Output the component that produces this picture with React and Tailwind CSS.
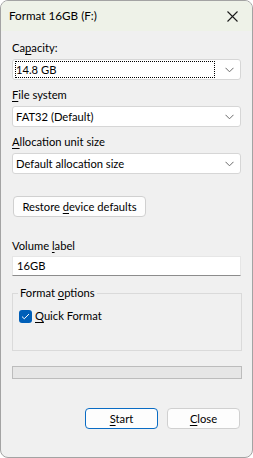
import React from 'react';

const Chevron = () => (
  <svg width="9" height="6" viewBox="0 0 9 6" className="shrink-0">
    <path d="M0.5 0.8 L4.5 4.8 L8.5 0.8" fill="none" stroke="#6a6a6a" strokeWidth="1" />
  </svg>
);

const Combo = ({ value, focused }) => (
  <div className="h-[21px] flex items-center justify-between bg-white border border-[#d6d6d6] rounded-[3px] pl-[2px] pr-[6px]">
    {focused ? (
      <div className="flex-1 h-[17px] mr-[10px] border border-dotted border-black flex items-center leading-none">
        {value}
      </div>
    ) : (
      <div className="flex-1 pl-[1px] leading-none">{value}</div>
    )}
    <Chevron />
  </div>
);

const Label = ({ pre, u, post, className = '' }) => (
  <div className={`h-[16px] leading-[16px] ${className}`}>
    {pre}
    <span className="underline underline-offset-[2px]">{u}</span>
    {post}
  </div>
);

export default function App() {
  return (
    <div className="w-[253px] h-[458px] bg-[#f0f0f0] border border-[#a3a3a3] rounded-[8px] overflow-hidden flex flex-col text-[11.2px] text-black font-['Segoe_UI','Lato',sans-serif]">
      {/* Title bar */}
      <div className="h-[30px] shrink-0 bg-[#eef2e8] flex items-center justify-between pl-[8px] pr-[14px]">
        <span className="leading-none text-[11.7px]">Format 16GB (F:)</span>
        <svg width="11" height="11" viewBox="0 0 11 11">
          <path d="M0.5 0.5 L10.5 10.5 M10.5 0.5 L0.5 10.5" stroke="#1b1b1b" strokeWidth="1.1" />
        </svg>
      </div>

      {/* Body */}
      <div className="flex flex-col px-[11px]">
        <Label pre="Ca" u="p" post="acity:" className="mt-[9px]" />
        <div className="mt-[3px]">
          <Combo value="14.8 GB" focused />
        </div>

        <Label pre="" u="F" post="ile system" className="mt-[7px]" />
        <div className="mt-[3px]">
          <Combo value="FAT32 (Default)" />
        </div>

        <Label pre="" u="A" post="llocation unit size" className="mt-[7px]" />
        <div className="mt-[3px]">
          <Combo value="Default allocation size" />
        </div>

        <div className="mt-[22px] flex">
          <button className="h-[21px] w-[133px] ml-[1px] bg-[#fdfdfd] border border-[#d0d0d0] rounded-[4px] leading-none">
            Restore <span className="underline underline-offset-[2px]">d</span>evice defaults
          </button>
        </div>

        <Label pre="Volume " u="l" post="abel" className="mt-[21px]" />
        <div className="mt-[2px] h-[20px] bg-white border border-[#e6e6e6] border-b-[#8c8c8c] flex items-center pl-[4px] leading-none">
          16GB
        </div>

        <fieldset className="mt-[9px] h-[66px] border border-[#dadada] pl-[6px] pr-[6px] mr-[-1px]">
          <legend className="px-[2px] ml-[-1px] leading-[16px]">
            Format <span className="underline underline-offset-[2px]">o</span>ptions
          </legend>
          <div className="mt-[7px] flex items-center gap-[3px]">
            <div className="w-[13px] h-[13px] rounded-[3px] bg-[#005fb8] flex items-center justify-center">
              <svg width="9" height="7" viewBox="0 0 9 7">
                <path d="M1 3.6 L3.3 5.8 L8 1" fill="none" stroke="#ffffff" strokeWidth="1" />
              </svg>
            </div>
            <span className="leading-[16px]">
              <span className="underline underline-offset-[2px]">Q</span>uick Format
            </span>
          </div>
        </fieldset>

        <div className="mt-[15px] h-[13px] bg-[#e6e6e6] border border-[#bcbcbc] mr-[-1px]" />

        <div className="mt-[29px] flex justify-end gap-[9px] pr-[1px]">
          <button className="h-[21px] w-[73px] bg-[#fdfdfd] border border-[#0a6cc4] rounded-[4px] leading-none">
            <span className="underline underline-offset-[2px]">S</span>tart
          </button>
          <button className="h-[21px] w-[73px] bg-[#fdfdfd] border border-[#d0d0d0] rounded-[4px] leading-none">
            <span className="underline underline-offset-[2px]">C</span>lose
          </button>
        </div>
      </div>
    </div>
  );
}
